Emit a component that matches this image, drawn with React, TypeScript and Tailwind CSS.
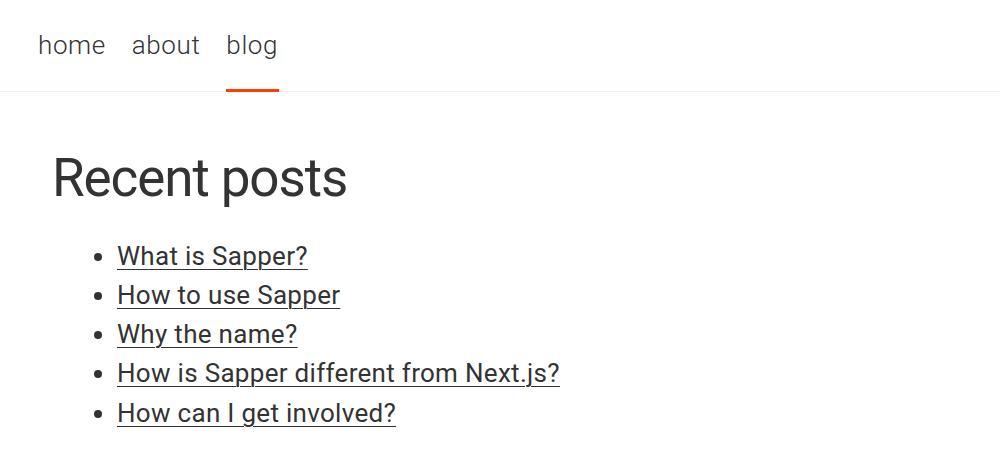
const NAV = [
  { label: "home", active: false },
  { label: "about", active: false },
  { label: "blog", active: true },
];

const POSTS = [
  "What is Sapper?",
  "How to use Sapper",
  "Why the name?",
  "How is Sapper different from Next.js?",
  "How can I get involved?",
];

export default function App() {
  return (
    <div className="h-[453px] overflow-hidden bg-white text-[26px] leading-[1.5] text-[#333] font-['Roboto',sans-serif]">
      <nav className="border-b border-[rgba(255,62,0,0.1)] px-[25px] font-light tracking-[0.6px]">
        <ul className="flex">
          {NAV.map((item) => (
            <li key={item.label}>
              <a href="#" className="relative block px-[13px] py-[26px] leading-[39px]">
                {item.label}
                {item.active && (
                  <span className="absolute left-[13px] right-[12px] bottom-[-1px] h-[3px] bg-[rgb(255,62,0)]" />
                )}
              </a>
            </li>
          ))}
        </ul>
      </nav>

      <main className="px-[52px] pt-[55px] pb-[52px]">
        <h1 className="text-[53px] leading-[1.2] font-normal tracking-[-1.1px] mb-[26px]">Recent posts</h1>
        <ul className="list-disc pl-[65px] my-[26px] tracking-[0.3px]">
          {POSTS.map((title) => (
            <li key={title} className="leading-[39.3px]">
              <a href="#" className="underline underline-offset-[4px] decoration-1">
                {title}
              </a>
            </li>
          ))}
        </ul>
      </main>
    </div>
  );
}
